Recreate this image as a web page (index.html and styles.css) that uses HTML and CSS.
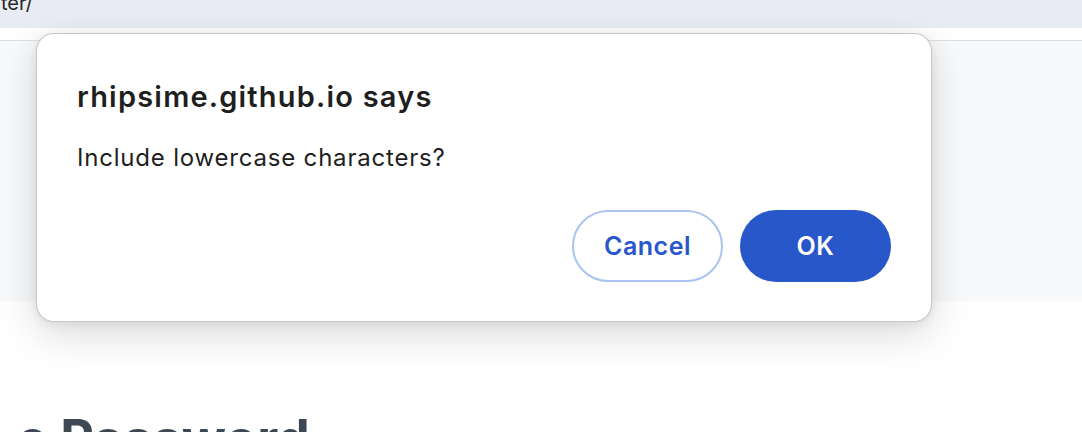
FILE: index.html
```html
<!DOCTYPE html>
<html lang="en">
<head>
<meta charset="utf-8">
<title>Password Generator</title>
<link rel="stylesheet" href="styles.css">
</head>
<body>
<div class="page">
  <div class="addressbar">
    <div class="url-clip"><span class="url">password-generater/</span></div>
  </div>
  <div class="gap"></div>
  <section class="hero"></section>
  <main class="content">
    <h1 class="heading">e Password</h1>
  </main>
</div>
<div class="dialog" role="alertdialog" aria-labelledby="dlg-title">
  <h2 class="dialog-title" id="dlg-title">rhipsime.github.io says</h2>
  <p class="dialog-message">Include lowercase characters?</p>
  <div class="dialog-actions">
    <button class="btn btn-cancel" type="button">Cancel</button>
    <button class="btn btn-ok" type="button">OK</button>
  </div>
</div>
</body>
</html>
```

FILE: styles.css
```css
html, body {
  margin: 0;
  padding: 0;
  width: 1082px;
  height: 432px;
  overflow: hidden;
  background: #ffffff;
}

.page {
  display: flex;
  flex-direction: column;
  font-family: Inter, "Liberation Sans", sans-serif;
}

.addressbar {
  height: 28px;
  background: #e9ecf4;
  overflow: hidden;
  display: flex;
}

.url-clip {
  width: 33px;
  overflow: hidden;
  display: flex;
  justify-content: flex-end;
  align-items: flex-start;
}

.url {
  flex: none;
  margin-top: -7px;
  font-size: 20px;
  line-height: 20px;
  color: #26282c;
  white-space: nowrap;
}

.gap {
  height: 12px;
  background: #ffffff;
  border-bottom: 1px solid #dedfe1;
}

.hero {
  height: 260px;
  background: #f8f9fb;
}

.content {
  padding-left: 17px;
}

.heading {
  margin: 0;
  padding-top: 108px;
  font-family: Inter, "Liberation Sans", sans-serif;
  font-size: 52px;
  font-weight: 700;
  line-height: 60px;
  color: #3d4852;
  white-space: nowrap;
}

.dialog {
  position: absolute;
  left: 36px;
  top: 33px;
  width: 896px;
  height: 289px;
  box-sizing: border-box;
  background: #ffffff;
  border-radius: 18px;
  border: 1px solid rgba(0, 0, 0, 0.22);
  box-shadow: 0 12px 40px rgba(0, 0, 0, 0.15), 0 2px 10px rgba(0, 0, 0, 0.07);
  padding: 0 40px;
  font-family: Inter, "Liberation Sans", sans-serif;
  display: flex;
  flex-direction: column;
}

.dialog-title {
  margin: 45px 0 0;
  font-size: 29px;
  line-height: 35px;
  font-weight: 600;
  letter-spacing: 1.2px;
  color: #1f1f1f;
}

.dialog-message {
  margin: 30px 0 0;
  font-size: 24px;
  line-height: 28px;
  font-weight: 400;
  letter-spacing: 0.8px;
  color: #1f1f1f;
}

.dialog-actions {
  margin-top: 38px;
  display: flex;
  justify-content: flex-end;
  gap: 17px;
}

.btn {
  width: 151px;
  height: 72px;
  border-radius: 36px;
  font-family: Inter, "Liberation Sans", sans-serif;
  font-size: 25px;
  font-weight: 600;
  letter-spacing: 0.5px;
  cursor: pointer;
}

.btn-cancel {
  background: #ffffff;
  color: #2757c8;
  border: 2px solid #aac4f0;
}

.btn-ok {
  background: #2757c8;
  color: #ffffff;
  border: none;
}
```
